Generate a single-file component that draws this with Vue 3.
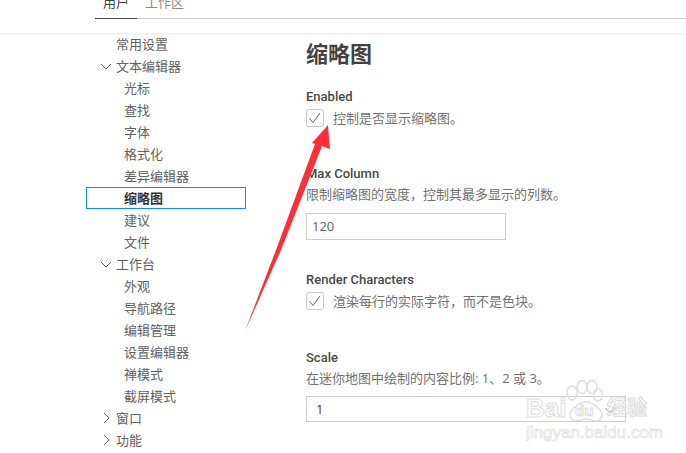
<script setup>
const nav = [
  { t: '常用设置', l: 1 },
  { t: '文本编辑器', l: 1, c: 'open' },
  { t: '光标', l: 2 }, { t: '查找', l: 2 }, { t: '字体', l: 2 }, { t: '格式化', l: 2 }, { t: '差异编辑器', l: 2 },
  { t: '缩略图', l: 2, sel: true },
  { t: '建议', l: 2 }, { t: '文件', l: 2 },
  { t: '工作台', l: 1, c: 'open' },
  { t: '外观', l: 2 }, { t: '导航路径', l: 2 }, { t: '编辑管理', l: 2 }, { t: '设置编辑器', l: 2 }, { t: '禅模式', l: 2 }, { t: '截屏模式', l: 2 },
  { t: '窗口', l: 1, c: 'closed' },
  { t: '功能', l: 1, c: 'closed' },
]
</script>

<template>
  <div class="page">
    <header class="head">
      <div class="tabs">
        <span class="tab active">用户</span>
        <span class="tab">工作区</span>
      </div>
    </header>
    <main class="body">
      <nav class="side">
        <div v-for="n in nav" :key="n.t" class="row" :class="['l' + n.l, { sel: n.sel }]">
          <svg v-if="n.c" class="tw" width="16" height="16" viewBox="0 0 16 16">
            <path v-if="n.c === 'open'" d="M3 6l5 5 5-5" />
            <path v-else d="M6 3l5 5-5 5" />
          </svg>
          <span>{{ n.t }}</span>
        </div>
      </nav>
      <section class="content">
        <h1>缩略图</h1>
        <div class="set s1">
          <div class="name">Enabled</div>
          <label class="chk">
            <span class="box"><svg width="16" height="16" viewBox="0 0 16 16"><path d="M2.5 8.5l3.5 4L13 3" /></svg></span>
            <span class="desc">控制是否显示缩略图。</span>
          </label>
        </div>
        <div class="set s2">
          <div class="name">Max Column</div>
          <div class="desc under">限制缩略图的宽度，控制其最多显示的列数。</div>
          <div class="input">120</div>
        </div>
        <div class="set s3">
          <div class="name">Render Characters</div>
          <label class="chk">
            <span class="box"><svg width="16" height="16" viewBox="0 0 16 16"><path d="M2.5 8.5l3.5 4L13 3" /></svg></span>
            <span class="desc">渲染每行的实际字符，而不是色块。</span>
          </label>
        </div>
        <div class="set s4">
          <div class="name">Scale</div>
          <div class="desc under">在迷你地图中绘制的内容比例: 1、2 或 3。</div>
          <div class="select">
            <span>1</span>
            <svg width="14" height="14" viewBox="0 0 16 16"><path d="M3 6l5 5 5-5" /></svg>
          </div>
        </div>
      </section>
    </main>

    <svg class="arrow" width="686" height="453" viewBox="0 0 686 453">
      <polygon points="328,125 312,143 315,144 276,250 245,331 281,250 322,146 330,149" fill="#fb3037" />
    </svg>

    <div class="mark">
      <svg class="paw" width="44" height="46" viewBox="0 0 44 46">
        <g fill="none" stroke="#dedede" stroke-width="1.5">
          <ellipse cx="7" cy="13" rx="5" ry="7" />
          <ellipse cx="17" cy="7" rx="5" ry="6.5" />
          <ellipse cx="27" cy="7" rx="5" ry="6.5" />
          <ellipse cx="33" cy="15" rx="4.5" ry="6" />
          <path d="M11 41c-6 0-8-8-3-12 4-3 6-7 13-7s9 4 13 7c5 4 3 12-3 12-4 0-7-2-10-2s-6 2-10 2z" />
        </g>
      </svg>
      <div class="brand"><span class="bai">Bai</span><span class="du">du</span><span class="jy">经验</span></div>
      <div class="url">jingyan.baidu.com</div>
    </div>
  </div>
</template>

<style>
html, body { margin: 0; background: #fff; }
</style>

<style scoped>
.page {
  position: relative;
  width: 686px;
  height: 453px;
  overflow: hidden;
  background: #fff;
  font-family: "Open Sans", "Noto Sans CJK SC", sans-serif;
  color: #616161;
}
.head {
  height: 33px;
  box-shadow: 0 1px 3px rgba(0, 0, 0, 0.09);
  box-sizing: border-box;
  overflow: hidden;
}
.tabs {
  display: flex;
  margin: -8px 0 0 95px;
  height: 27px;
  box-sizing: border-box;
  border-bottom: 1px solid #c8c8c8;
}
.tab {
  padding: 0 8px;
  font-size: 13px;
  line-height: 20px;
  height: 27px;
  box-sizing: border-box;
  color: #8a8a8a;
}
.tab.active {
  color: #424242;
  border-bottom: 1px solid #424242;
  width: 42px;
}
.body {
  display: flex;
  height: 420px;
}
.side {
  width: 160px;
  margin-left: 86px;
  flex: none;
}
.row {
  position: relative;
  height: 22px;
  line-height: 22px;
  font-size: 13px;
  color: #616161;
  box-sizing: border-box;
}
.row.l1 { padding-left: 30px; }
.row.l2 { padding-left: 38px; }
.row.sel {
  color: #333;
  font-weight: 700;
  border: 1px solid #0e8fe8;
  line-height: 20px;
  padding-left: 37px;
}
.tw {
  position: absolute;
  left: 12px;
  top: 3px;
  fill: none;
  stroke: #616161;
  stroke-width: 1;
}
.content {
  flex: 1;
  padding-left: 60px;
}
h1 {
  margin: 6px 0 0;
  font-size: 22px;
  line-height: 28px;
  font-weight: 700;
  color: #424242;
}
.name {
  font-family: Roboto, sans-serif;
  font-size: 13px;
  line-height: 18px;
  font-weight: 500;
  color: #484848;
}
.desc {
  font-size: 13px;
  line-height: 18px;
  color: #717171;
}
.desc.under { margin-top: 2px; }
.set.s1 { margin-top: 21px; }
.set.s2 { margin-top: 38px; }
.set.s3 { margin-top: 31px; }
.set.s4 { margin-top: 39px; }
.chk {
  display: flex;
  align-items: center;
  height: 18px;
  margin-top: 3px;
}
.box {
  width: 16px;
  height: 16px;
  border: 1px solid #c8c8c8;
  border-radius: 3px;
  margin-right: 9px;
  display: block;
  flex: none;
}
.box svg {
  display: block;
  fill: none;
  stroke: #616161;
  stroke-width: 1;
}
.input {
  width: 200px;
  height: 27px;
  margin-top: 10px;
  border: 1px solid #cecece;
  box-sizing: border-box;
  padding-left: 5px;
  font-size: 13px;
  line-height: 25px;
  color: #616161;
}
.select {
  position: relative;
  width: 320px;
  height: 26px;
  margin-top: 9px;
  border: 1px solid #cecece;
  box-sizing: border-box;
  padding-left: 9px;
  font-size: 13px;
  line-height: 24px;
  color: #7a2048;
}
.select svg {
  position: absolute;
  right: 8px;
  top: 6px;
  fill: none;
  stroke: #616161;
  stroke-width: 1;
}
.arrow {
  position: absolute;
  left: 0;
  top: 0;
  pointer-events: none;
}
.mark {
  position: absolute;
  left: 526px;
  top: 382px;
  width: 160px;
  height: 71px;
  pointer-events: none;
}
.paw {
  position: absolute;
  left: 39px;
  top: -2px;
}
.brand {
  position: absolute;
  left: 0;
  top: 11px;
  height: 30px;
  display: flex;
  align-items: flex-start;
  font-family: "Liberation Sans", "Noto Sans CJK SC", sans-serif;
  font-weight: 700;
  color: rgba(255, 255, 255, 0.4);
  -webkit-text-stroke: 1px #dcdcdc;
}
.bai { font-size: 26px; line-height: 30px; width: 49px; }
.du { font-size: 15px; line-height: 18px; width: 32px; margin-top: 9px; }
.jy { font-size: 20px; line-height: 28px; margin-top: 1px; }
.url {
  position: absolute;
  left: 0;
  top: 42px;
  font-family: "Liberation Sans", sans-serif;
  font-size: 17px;
  line-height: 18px;
  color: rgba(255, 255, 255, 0.4);
  -webkit-text-stroke: 0.7px #dedede;
  white-space: nowrap;
}
</style>
